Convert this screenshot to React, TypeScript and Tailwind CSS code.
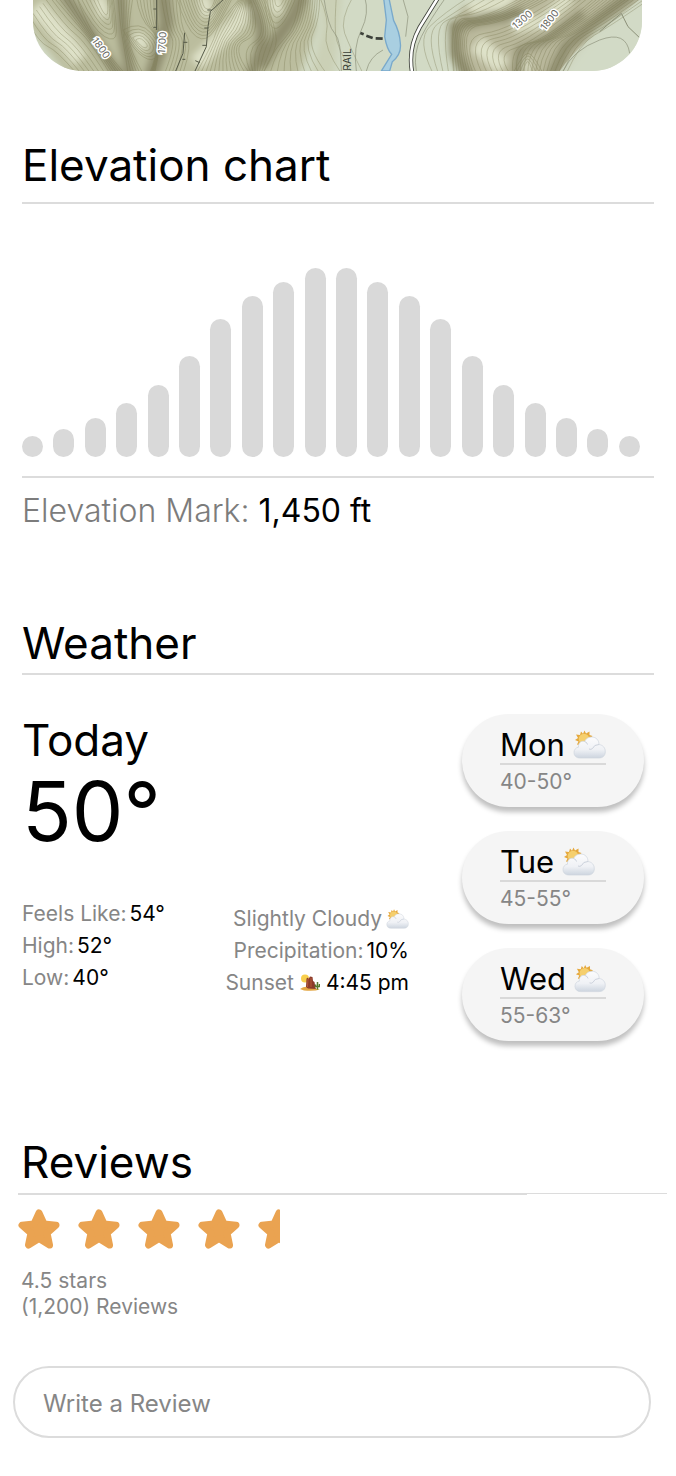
type Point = [number, number];

const elevation = [21, 28, 39, 54, 72, 101, 138, 161, 175, 189];
const bars = [...elevation, ...[...elevation].reverse()];

const forecast = [
  { day: "Mon", range: "40-50°" },
  { day: "Tue", range: "45-55°" },
  { day: "Wed", range: "55-63°" },
];

const today = [
  { label: "Feels Like:", value: "54°" },
  { label: "High:", value: "52°" },
  { label: "Low:", value: "40°" },
];

// smooth line through the midpoints of a polyline
function curve(points: Point[]) {
  let d = `M${points[0][0]} ${points[0][1]}`;
  for (let i = 1; i < points.length - 1; i++) {
    const [x, y] = points[i];
    const [nx, ny] = points[i + 1];
    const last = i === points.length - 2;
    d += ` Q${x} ${y} ${last ? nx : (x + nx) / 2} ${last ? ny : (y + ny) / 2}`;
  }
  return d;
}

// each family is a set of contour lines blended from one line to another
const contours: { from: Point[]; to: Point[]; count: number }[] = [
  { from: [[-20, 60], [20, 130], [70, 150], [130, 220]], to: [[50, -10], [110, 70], [170, 120], [230, 220]], count: 8 },
  { from: [[60, -10], [130, 70], [180, 130], [238, 220]], to: [[130, -10], [160, 70], [215, 150], [275, 220]], count: 6 },
  { from: [[130, -10], [180, 90], [250, 130], [250, 60], [240, -10]], to: [[190, -10], [205, 30], [222, 50], [226, 25], [222, -10]], count: 6 },
  { from: [[255, -10], [262, 80], [275, 150], [285, 220]], to: [[300, -10], [285, 80], [290, 150], [330, 220]], count: 6 },
  { from: [[270, 90], [320, 60], [390, 140], [360, 190], [300, 150], [270, 90]], to: [[308, 120], [320, 110], [345, 135], [340, 145], [325, 140], [308, 120]], count: 5 },
  { from: [[310, -10], [320, 60], [390, 120], [350, 220]], to: [[372, -10], [372, 70], [385, 130], [365, 220]], count: 7 },
  { from: [[385, -10], [400, 90], [430, 130], [395, 220]], to: [[440, -10], [440, 80], [480, 130], [450, 220]], count: 6 },
  { from: [[430, -10], [460, 90], [520, 130], [570, 50], [600, -10]], to: [[505, -10], [510, 20], [525, 30], [540, 20], [548, -10]], count: 10 },
  { from: [[490, 220], [540, 130], [560, 60], [625, -10]], to: [[650, 220], [590, 140], [690, 100], [650, -10]], count: 13 },
  { from: [[655, 220], [620, 150], [710, 100], [655, -10]], to: [[690, 220], [730, 150], [730, 90], [695, -10]], count: 7 },
  { from: [[695, -10], [700, 80], [750, 90], [790, -10]], to: [[725, -10], [725, 20], [745, 20], [755, -10]], count: 5 },
  { from: [[690, 220], [720, 150], [790, 80], [800, -10]], to: [[880, 220], [820, 140], [860, 60], [860, -10]], count: 10 },
  { from: [[925, 220], [870, 140], [890, 60], [860, -10]], to: [[990, 220], [950, 140], [920, 60], [960, -10]], count: 3 },
  { from: [[1200, 220], [1150, 120], [1230, 40], [1310, -10]], to: [[1262, 220], [1245, 40], [1330, 50], [1430, -10]], count: 5 },
  { from: [[1264, 220], [1245, 50], [1350, 60], [1470, -10]], to: [[1320, 220], [1270, 80], [1420, 70], [1560, -10]], count: 8 },
  { from: [[1330, 220], [1280, 110], [1430, 90], [1580, -10]], to: [[1430, 220], [1390, 160], [1500, 130], [1670, -10]], count: 7 },
  { from: [[1440, 220], [1430, 140], [1540, 120], [1690, -10]], to: [[1540, 220], [1560, 130], [1650, 90], [1790, -10]], count: 10 },
  { from: [[1550, 220], [1580, 130], [1690, 70], [1800, -10]], to: [[1600, 220], [1640, 130], [1730, 80], [1860, -10]], count: 5 },
  { from: [[1440, 220], [1470, 160], [1500, 160], [1530, 220]], to: [[1468, 220], [1478, 185], [1490, 185], [1500, 220]], count: 4 },
];

const lines = contours.flatMap(({ from, to, count }) =>
  Array.from({ length: count }, (_, i) => {
    const t = count > 1 ? i / (count - 1) : 0;
    return curve(
      from.map(([x, y], k): Point => [
        Math.round(x + (to[k][0] - x) * t),
        Math.round(y + (to[k][1] - y) * t),
      ]),
    );
  }),
);

function TrailMap() {
  return (
    <svg
      viewBox="0 0 1827 213"
      className="block w-full rounded-b-[50px]"
      role="img"
      aria-label="Trail map"
    >
      <defs>
        <filter id="shade" x="-10%" y="-50%" width="120%" height="200%">
          <feGaussianBlur stdDeviation="11" />
        </filter>
      </defs>
      <rect width="1827" height="213" fill="#d2dac5" />
      <g filter="url(#shade)">
        <path d="M-40 -40H830L850 80 790 250H120L-40 40Z" fill="#bbbd9e" />
        <path d="M850 -40L870 80 830 250H900L930 -40Z" fill="#cbd0b6" />
        <path d="M1290 250L1245 90 1290 20 1480 -50H1900L1690 90 1570 250Z" fill="#b9b89b" />
        <g fill="none" stroke="#8f8d6e" strokeWidth="34">
          <path d="M90 -20L155 70 200 140 265 240" />
          <path d="M262 -20L268 90 295 240" />
          <path d="M390 -20L400 70 380 150 350 240" strokeWidth="44" />
          <path d="M650 -20L685 90 680 150 650 240" />
          <path d="M810 -20L780 50 730 120 680 200" strokeWidth="44" />
          <path d="M1310 240L1268 160 1265 80 1340 60 1470 40" strokeWidth="36" />
          <path d="M1450 240L1460 150 1540 120 1650 40" strokeWidth="26" />
          <path d="M1550 240L1600 140 1690 65 1800 -20" strokeWidth="36" />
        </g>
        <g fill="none" stroke="#dfe2c9" strokeWidth="32">
          <path d="M10 20L80 100 140 180" strokeWidth="50" />
          <path d="M195 -10L215 50" />
          <path d="M310 100L335 145" />
          <path d="M510 -10L525 50" />
          <path d="M490 190L550 130 620 60 630 20" strokeWidth="46" />
          <path d="M720 -10L735 40" />
          <path d="M1330 130L1410 200" strokeWidth="52" />
          <path d="M1310 25L1400 10 1440 -20" strokeWidth="40" />
          <path d="M1480 220L1485 180" strokeWidth="20" />
          <path d="M1440 80L1530 65 1610 -10" strokeWidth="38" />
        </g>
      </g>
      <path
        d="M1580 213Q1640 130 1710 90L1830 -10V213Z"
        fill="#d2dac5"
        opacity=".75"
      />
      <g fill="none" stroke="#77764f" strokeWidth="2" opacity=".5">
        {lines.map((d, i) => (
          <path key={i} d={d} />
        ))}
      </g>

      <g fill="none" stroke="#8b9078" strokeWidth="2">
        <path d="M872 -10Q885 80 905 100T925 213" />
        <path d="M995 -10Q1010 40 985 90T970 213" />
        <path d="M1000 213Q1010 170 1050 150" />
        <path d="M1108 -10L1125 50 1118 110" />
        <path d="M1150 213Q1140 160 1165 110T1240 -10" />
        <path d="M1590 213Q1620 150 1700 120T1790 160" />
        <path d="M1700 95Q1740 60 1765 40L1785 80 1827 120" strokeWidth="3" />
      </g>
      <g fill="none" stroke="#565a48" strokeWidth="3">
        <path d="M371 -5V90M361 27H371M361 82H371" />
        <path d="M455 98L450 160 428 213M451 127H463M448 178H457" />
        <path d="M575 -5L532 35 525 80 520 140 486 213M523 30H536M514 84H526M508 136H520M487 182L500 188" />
      </g>

      <path
        d="M1052 -5L1060 60 1055 110Q1062 150 1076 163L1045 213H1070L1078 185Q1106 163 1102 130 1100 95 1082 62L1068 -5Z"
        fill="#a9cfe1"
        stroke="#79a9cb"
        strokeWidth="4"
      />
      <path
        d="M1214 -5L1160 82Q1125 145 1137 215"
        fill="none"
        stroke="#3f423b"
        strokeWidth="13"
      />
      <path
        d="M1214 -5L1160 82Q1125 145 1137 215"
        fill="none"
        stroke="#fff"
        strokeWidth="8"
      />
      <path
        d="M982 99L992 103M1000 107L1019 114M1028 115L1049 116"
        stroke="#3c403a"
        strokeWidth="8"
      />

      <g
        fill="#66665e"
        stroke="#fff"
        strokeWidth="9"
        paintOrder="stroke"
        fontFamily="Inter, sans-serif"
        fontSize="30"
        textAnchor="middle"
      >
        <text transform="translate(196 150) rotate(54)">1800</text>
        <text transform="translate(398 129) rotate(-86)">1700</text>
        <text transform="translate(1475 67) rotate(-40)">1300</text>
        <text transform="translate(1558 66) rotate(-52)">1800</text>
      </g>
      <text
        transform="translate(955 232) rotate(-90)"
        fill="#393d34"
        fontFamily="Inter, sans-serif"
        fontSize="31"
      >
        TRAIL
      </text>
    </svg>
  );
}

function CloudIcon({ className }: { className: string }) {
  return (
    <svg viewBox="0 0 33 29" className={className} aria-hidden="true">
      <defs>
        <linearGradient id="cloud" x1="0" y1="0" x2="0" y2="1">
          <stop offset="0" stopColor="#fcfcfd" />
          <stop offset=".6" stopColor="#eff1f5" />
          <stop offset="1" stopColor="#cdd5df" />
        </linearGradient>
      </defs>
      <path
        d="M11.500 .5L13 3.500 16.500 1.500 16.500 5 19.500 6 17.500 8.500 18 13 9 16 4 14.500 5.500 11.500 2 10 5 8 3 4.500 7 5 8 1.500 10 3.800Z"
        fill="#e5a83c"
      />
      <circle cx="11" cy="9" r="5.300" fill="#f5cf6e" />
      <path
        d="M7 28C3 28 1 25.500 1 22.500 1 19.500 3 17.500 5.500 17.200 5 12.500 8.500 10.500 11.500 11.500 13 8.500 15.500 7 18.500 7 23 7 26 10 26 14.500 30 15 32.300 18 32.300 21.500 32.300 25.500 30 28 26 28Z"
        fill="url(#cloud)"
        stroke="#ced5de"
        strokeWidth=".7"
      />
      <path
        d="M11.500 11.500Q14 12 14.500 14.500M26 14.500Q21 14.500 19.500 18.500Q18 20 16 19"
        fill="none"
        stroke="#cbd1db"
        strokeWidth="1"
      />
    </svg>
  );
}

function SunsetIcon() {
  return (
    <svg viewBox="0 0 20 18" className="h-[18px] w-5" aria-hidden="true">
      <circle cx="5" cy="4.500" r="4" fill="#f8cf4d" />
      <path d="M0 15Q4 12 9 13L20 15.500Q14 17.500 4 16.500Z" fill="#e3a643" />
      <path d="M6 13L6.500 4.500 8 3.500 8.500 5 10 2.500 12.500 3 13 7 14.500 8 15.500 14 16 15 8 14.500Z" fill="#8c3b2b" />
      <path d="M8 5L7.500 13M11 4V13" stroke="#b65a3b" strokeWidth="1" />
      <path d="M17.500 8V15.500M15.500 10.500V12.500H19.500V10" fill="none" stroke="#55792f" strokeWidth="1.500" />
    </svg>
  );
}

function Star({ half = false }: { half?: boolean }) {
  return (
    <svg
      viewBox={half ? "0 0 22 40" : "0 0 42 40"}
      className={half ? "h-10 w-[22px]" : "h-10 w-[42px]"}
      aria-hidden="true"
    >
      <path
        d="M21 4L26 15 38 16.200 29 24 31.500 36 21 29.500 10.500 36 13 24 4 16.200 16 15Z"
        fill="#eaa351"
        stroke="#eaa351"
        strokeWidth="7"
        strokeLinejoin="round"
      />
    </svg>
  );
}

function App() {
  return (
    <main className="min-h-screen bg-white pb-9 font-['Inter',sans-serif] text-black">
      <div className="pl-[33px] pr-[34px]">
        <TrailMap />
      </div>

      <section className="px-[22px] pt-[68px]">
        <h2 className="text-[44px] leading-[52px]">Elevation chart</h2>
        <div className="mt-[11px] flex h-[276px] items-end justify-between border-y-2 border-[#dcdcdc] pb-[19px] pr-[14px]">
          {bars.map((height, i) => (
            <div
              key={i}
              className="w-[21px] rounded-full bg-[#d9d9d9]"
              style={{ height }}
            />
          ))}
        </div>
        <p className="mt-[13px] text-[32px] leading-10">
          <span className="font-light text-[#7c7c7c]">Elevation Mark:</span> 1,450 ft
        </p>
      </section>

      <section className="px-[22px] pt-[86px]">
        <h2 className="border-b-2 border-[#dcdcdc] pb-1 text-[44px] leading-[52px]">
          Weather
        </h2>
        <div className="flex justify-between pr-[10px] pt-[39px]">
          <div className="flex w-[387px] flex-col">
            <h3 className="text-[44px] leading-[52px]">Today</h3>
            <p className="mt-1 text-[82px] leading-[84px]">50°</p>
            <div className="mt-11 flex justify-between text-[21px] leading-8">
              <div>
                {today.map((item) => (
                  <p key={item.label} className="flex gap-[3px]">
                    <span className="text-[#868686]">{item.label}</span>
                    <span>{item.value}</span>
                  </p>
                ))}
              </div>
              <div className="flex flex-col items-end pt-[5px]">
                <p className="flex items-center gap-1 text-[#868686]">
                  Slightly Cloudy <CloudIcon className="h-5 w-[23px]" />
                </p>
                <p className="flex gap-[3px]">
                  <span className="text-[#868686]">Precipitation:</span>
                  <span>10%</span>
                </p>
                <p className="flex items-center gap-[6px]">
                  <span className="text-[#868686]">Sunset</span>
                  <SunsetIcon />
                  4:45 pm
                </p>
              </div>
            </div>
          </div>

          <div className="flex w-[182px] flex-col gap-6">
            {forecast.map((item) => (
              <div
                key={item.day}
                className="h-[93px] rounded-full bg-[#f5f5f5] px-[38px] pt-[13px] shadow-[0_5px_5px_rgba(0,0,0,0.25)]"
              >
                <div className="flex items-end gap-2 border-b-2 border-[#d9d9d9] text-[31px] leading-9">
                  <span>{item.day}</span>
                  <CloudIcon className="mb-1 h-[29px] w-[33px]" />
                </div>
                <p className="text-[21px] leading-[34px] text-[#868686]">
                  {item.range}
                </p>
              </div>
            ))}
          </div>
        </div>
      </section>

      <section className="pl-[18px] pr-[9px] pt-[95px]">
        <h2 className="pl-[3px] text-[44px] leading-[52px]">Reviews</h2>
        <div className="mt-[5px] flex">
          <div className="w-[509px] border-t-2 border-[#dcdcdc]" />
          <div className="flex-1 border-t border-[#dcdcdc]" />
        </div>
        <div className="mt-[14px] flex gap-[18px]" role="img" aria-label="4.5 out of 5 stars">
          <Star />
          <Star />
          <Star />
          <Star />
          <Star half />
        </div>
        <div className="pl-[3px] pt-[19px] text-[21px] leading-[26px] text-[#868686]">
          <p>4.5 stars</p>
          <p>(1,200) Reviews</p>
        </div>
      </section>

      <div className="pl-[13px] pr-[25px] pt-[46px]">
        <input
          type="text"
          aria-label="Write a Review"
          placeholder="Write a Review"
          className="h-[72px] w-full rounded-full border-2 border-[#dcdcdc] bg-white px-7 pt-[2px] text-2xl text-black outline-none placeholder:text-[#868686]"
        />
      </div>
    </main>
  );
}

export default App;
